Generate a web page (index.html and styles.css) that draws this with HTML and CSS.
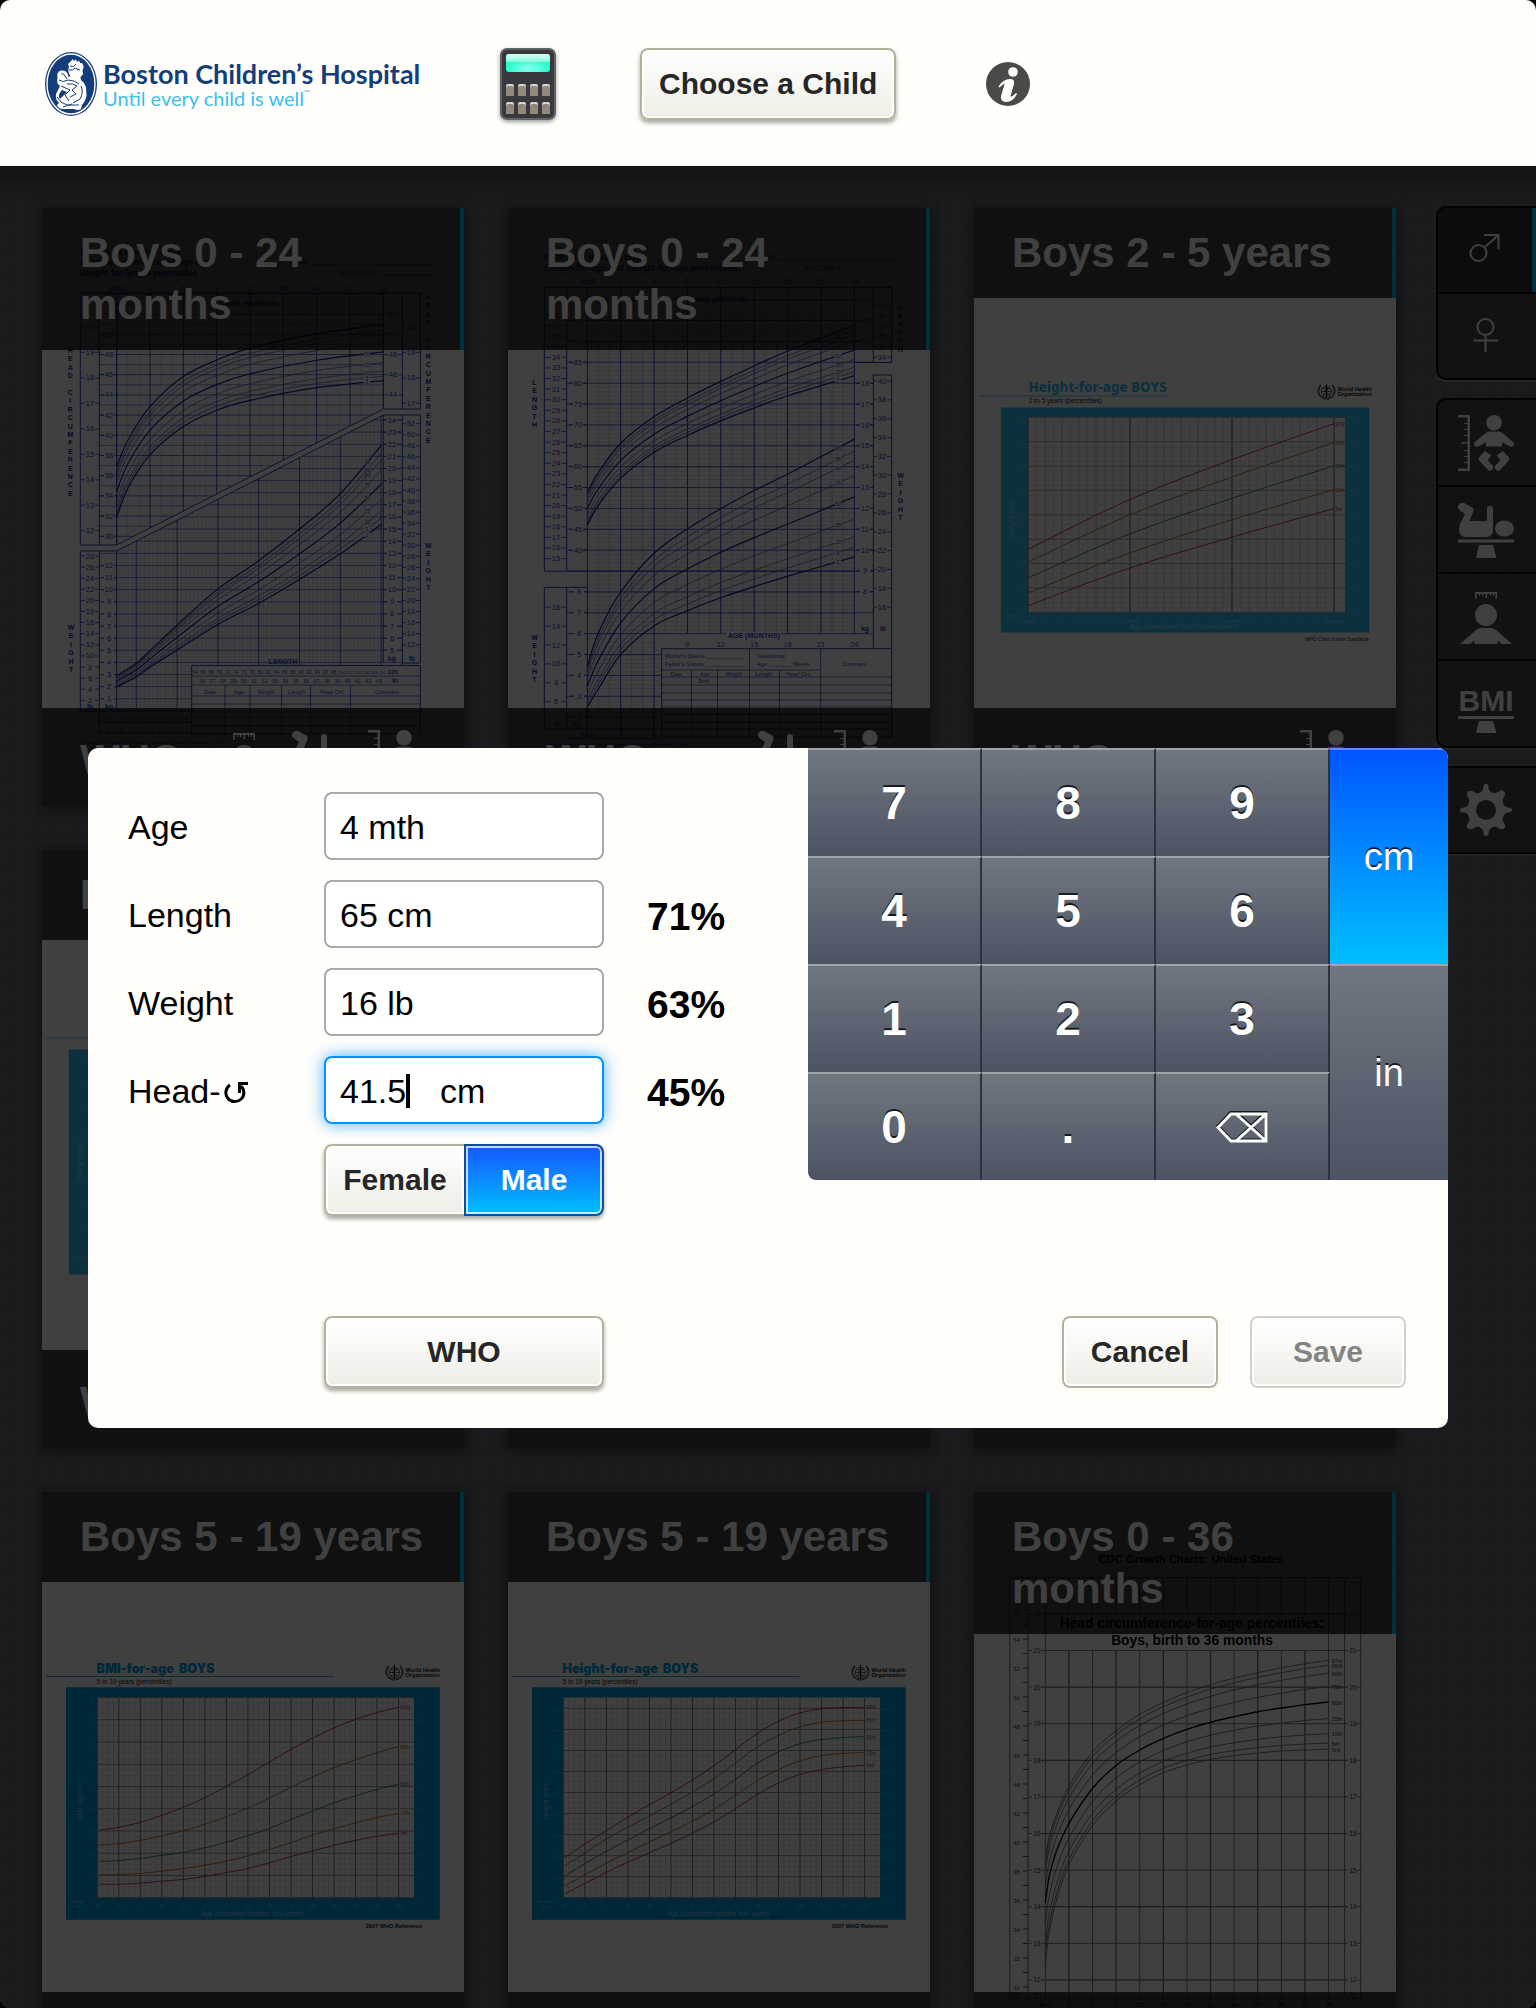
FILE: index.html
```html
<!DOCTYPE html>
<html lang="en">
<head>
<meta charset="utf-8">
<meta name="viewport" content="width=device-width, initial-scale=1">
<title>Growth charts - Boston Children's Hospital</title>
<link rel="stylesheet" href="styles.css">
</head>
<body>
<svg class="sprite" aria-hidden="true">
  <symbol id="i-length" viewBox="0 0 56 56">
    <path d="M0 0H12V56H0V53.5H9.500V2.500H0zM6 8h4v1H6zM6 14h4v1H6zM6 20h4v1H6zM3 27h7v1.500H3zM6 35h4v1H6zM6 41h4v1H6zM6 47h4v1H6z"/>
    <circle cx="36" cy="7.700" r="7.700"/>
    <path d="M32 16.500H40Q43 16.500 45 18.500L55 27Q57 29 55 31Q53.500 32.500 51 31L44 27V31.500H28V27L21 31Q18.500 32.500 17 31Q15 29 17 27L27 18.500Q29 16.500 32 16.500z"/>
    <path d="M27 36L33.500 40.500L29.500 45L35 51Q36 53 34 55Q32 56.500 30 55L21.500 46Q20 44 21.500 42zM45 36L38.500 40.500L42.500 45L37 51Q36 53 38 55Q40 56.500 42 55L50.500 46Q52 44 50.500 42z"/>
  </symbol>
  <symbol id="i-weight" viewBox="0 0 56 56">
    <path d="M6 1L14.500 5.500Q16 7 15.500 9L11.500 19H29V7Q29 4 32 4Q35 4 35 7V28Q35 35 28 35H8Q1 35 1 27Q1 23 3 20L7 12L1.500 8Q-1 6 .5 3Q3 0 6 1z"/>
    <ellipse cx="46.500" cy="26.500" rx="9.500" ry="8"/>
    <path d="M0 37.500H56V40.500H0zM21 43H35L38.500 56H18z"/>
  </symbol>
  <symbol id="i-head" viewBox="0 0 56 56">
    <path d="M17 3H39V10H37.500V5H36V7H35V5H33V7H32V5H29V9H27.500V5H25V7H24V5H22V7H21V5H18.500V10H17z"/>
    <circle cx="28" cy="26" r="11"/>
    <path d="M2 55L18 41Q20 39 23 39H33Q36 39 38 41L54 55H44L39.500 51.500V55H16.500V51.500L12 55z"/>
  </symbol>
  <symbol id="i-male" viewBox="0 0 56 56">
    <path d="M27 25L40 13.500M26 13H40.500V27" class="thin"/><circle cx="20.500" cy="31" r="8" class="thin"/>
  </symbol>
  <symbol id="i-female" viewBox="0 0 56 56">
    <circle cx="27.500" cy="19" r="8" class="thin"/><path d="M27.500 27V44M15.500 32.500H40" class="thin"/>
  </symbol>
  <symbol id="i-gear" viewBox="0 0 56 56">
    <path fill-rule="evenodd" d="M25.500 5Q25.500 2 28 2T30.500 5Q30.500 9 34 10.500T40 10Q43 7 45.200 8.800Q48.500 11 46 15Q43.500 18 45.500 22Q46.500 25 50 25.500Q54 25.500 54 28T50 30.500Q46.500 31 45.500 34Q43.500 38 46 41Q48.500 45 46.300 46.300Q44 48.500 40 46Q37 43.500 34 45.500Q30.500 47 30.500 51Q30.500 54 28 54T25.500 51Q25.500 47 22 45.500Q19 43.500 16 46Q12 48.500 9.700 46.300Q7.500 44 10 41Q12.500 38 10.500 34Q9.500 31 6 30.500Q2 30.500 2 28T6 25.500Q9.500 25 10.500 22Q12.500 18 10 15Q7.500 11 9.700 9.700Q12 7.500 16 10Q19 12.500 22 10.500Q25.500 9 25.500 5zM28 18A10 10 0 1 0 28 38A10 10 0 1 0 28 18z"/>
  </symbol>
  <symbol id="i-who" viewBox="0 0 20 18">
    <circle cx="10" cy="9" r="5.500" class="globe"/>
    <path d="M10 3.500V14.500M4.500 9H15.500M6 5.500Q10 8 14 5.500M6 12.500Q10 10 14 12.500" class="globe"/>
    <path d="M4 2Q-1.500 9 4 14.500L9.500 17M16 2Q21.500 9 16 14.500L10.500 17" class="wreath"/>
    <path d="M10 1V16M8.500 4Q12.500 5 10 7Q7 9 10 10.500Q12 12 9.500 13" class="staff"/>
  </symbol>
</svg>

<div class="app">
  <header class="topbar">
    <a class="brand" href="#">
      <svg class="brand__seal" viewBox="0 0 52 64" aria-hidden="true">
        <ellipse cx="26" cy="32" rx="26" ry="32" fill="#143d7b"/>
        <ellipse cx="26" cy="32" rx="24" ry="30" fill="none" stroke="#fffefb" stroke-width="1.400"/>
        <path fill="#fffefb" d="M26 9L28 7L29 9L31 7.500L32 10L34 8.500L35 11L37 11Q40 15 37.500 18L38 22Q37 24 35.500 25L36 28Q40 31 41 35L41.500 44Q40 50 37 53L36 57Q33 59 29 57L17 57Q13 56 12 53L14 51Q10 47 11 42L15 34Q11 31 12.500 26Q11 20 16 18.500Q22 18 23 23L23.500 25L25.500 24Q22 19 24 15L23 12z"/>
        <path fill="none" stroke="#143d7b" stroke-width="1" d="M25 14Q29 16 31 12M24 18Q28 19 30 16L35 18M16 22Q19 21 20 24L22 27M14 28Q18 31 23 28L29 29L34 32M22 32Q28 31 32 34L27 38L31 42L25 45M16 34L25 38L20 43L24 49M36 34Q39 40 35 47L28 51M12 45Q15 51 22 53L34 53M18 55L27 52"/>
        <path fill="#143d7b" d="M32 18L34 17L33 19zM17 38L22 40L15 47Q12 43 17 38z"/>
      </svg>
      <span class="brand__text">
        <span class="brand__name">Boston Children’s Hospital</span>
        <span class="brand__tag">Until every child is well<small>™</small></span>
      </span>
    </a>
    <button class="calc" type="button" aria-label="Calculator">
      <svg viewBox="0 0 56 72" aria-hidden="true">
        <defs>
          <radialGradient id="lcd" cx=".5" cy=".8" r=".6"><stop offset="0" stop-color="#8effe9"/><stop offset="1" stop-color="#12fcc6"/></radialGradient>
          <linearGradient id="glare" x2="0" y2="1"><stop offset="0" stop-color="#d6fff4"/><stop offset="1" stop-color="#86fbdd"/></linearGradient>
          <g id="calc-key"><rect width="8" height="12" rx="2" fill="#d8d5d2"/><path d="M0 4Q0 2 2 2H6Q8 2 8 4V10Q8 12 6 12H2Q0 12 0 10z" fill="#94877b"/></g>
        </defs>
        <rect x="1" y="1" width="54" height="70" rx="6" fill="#38393d" stroke="#636466" stroke-width="2"/>
        <rect x="6" y="6" width="44" height="18" rx="3" fill="url(#lcd)"/>
        <path d="M6 14V9Q6 6 9 6H47Q50 6 50 9V14z" fill="url(#glare)"/>
        <use href="#calc-key" x="6" y="36"/><use href="#calc-key" x="18" y="36"/><use href="#calc-key" x="30" y="36"/><use href="#calc-key" x="42" y="36"/>
        <use href="#calc-key" x="6" y="54"/><use href="#calc-key" x="18" y="54"/><use href="#calc-key" x="30" y="54"/><use href="#calc-key" x="42" y="54"/>
      </svg>
    </button>
    <button class="btn btn--raised" type="button">Choose a Child</button>
    <button class="info" type="button" aria-label="About">
      <svg viewBox="0 0 44 44" aria-hidden="true">
        <circle cx="22" cy="22" r="22" fill="#4b4a48"/>
        <circle cx="27" cy="10" r="4.800" fill="#fffefb"/>
        <path fill="#fffefb" d="M12.500 24.500Q17 17 24 17Q29 17 28 22L24.500 34Q25 36 30 31L31 32Q27 40 20 40Q14 39.500 15 34L18.500 22.500Q18.500 20.500 13.500 25.500z"/>
      </svg>
    </button>
  </header>

  <main class="stage">
    <section class="gallery" aria-label="Growth charts">
      <article class="card">
        <svg class="card__chart" viewBox="0 0 422 598" data-chart="headWeight"></svg>
        <h2 class="card__title">Boys 0 - 24 months</h2>
        <footer class="card__foot"><span>WHO</span><svg class="icon"><use href="#i-head"/></svg><svg class="icon"><use href="#i-weight"/></svg><svg class="icon"><use href="#i-length"/></svg></footer>
      </article>
      <article class="card">
        <svg class="card__chart" viewBox="0 0 422 598" data-chart="lengthWeight"></svg>
        <h2 class="card__title">Boys 0 - 24 months</h2>
        <footer class="card__foot"><span>WHO</span><svg class="icon"><use href="#i-weight"/></svg><svg class="icon"><use href="#i-length"/></svg></footer>
      </article>
      <article class="card">
        <svg class="card__chart" viewBox="0 0 422 598" data-chart="height2to5"></svg>
        <h2 class="card__title">Boys 2 - 5 years</h2>
        <footer class="card__foot"><span>WHO</span><svg class="icon"><use href="#i-length"/></svg></footer>
      </article>
      <article class="card">
        <svg class="card__chart" viewBox="0 0 422 598" data-chart="weight2to5"></svg>
        <h2 class="card__title">Boys 2 - 5 years</h2>
        <footer class="card__foot"><span>WHO</span><svg class="icon"><use href="#i-weight"/></svg></footer>
      </article>
      <article class="card">
        <svg class="card__chart" viewBox="0 0 422 598"></svg>
        <h2 class="card__title">Boys 2 - 5 years</h2>
        <footer class="card__foot"><span>WHO</span></footer>
      </article>
      <article class="card">
        <svg class="card__chart" viewBox="0 0 422 598"></svg>
        <h2 class="card__title">Boys 5 - 10 years</h2>
        <footer class="card__foot"><span>WHO</span></footer>
      </article>
      <article class="card">
        <svg class="card__chart" viewBox="0 0 422 598" data-chart="bmi5to19"></svg>
        <h2 class="card__title">Boys 5 - 19 years</h2>
        <footer class="card__foot"><span>WHO</span></footer>
      </article>
      <article class="card">
        <svg class="card__chart" viewBox="0 0 422 598" data-chart="height5to19"></svg>
        <h2 class="card__title">Boys 5 - 19 years</h2>
        <footer class="card__foot"><span>WHO</span></footer>
      </article>
      <article class="card">
        <svg class="card__chart" viewBox="0 0 422 598" data-chart="head0to36"></svg>
        <h2 class="card__title">Boys 0 - 36 months</h2>
        <footer class="card__foot"><span>CDC</span></footer>
      </article>
    </section>

    <nav class="filters" aria-label="Filters">
      <div class="filters__group">
        <button class="filters__item is-active" type="button" aria-label="Boys"><svg class="icon"><use href="#i-male"/></svg></button>
        <button class="filters__item" type="button" aria-label="Girls"><svg class="icon"><use href="#i-female"/></svg></button>
      </div>
      <div class="filters__group filters__group--measures">
        <button class="filters__item" type="button" aria-label="Length"><svg class="icon"><use href="#i-length"/></svg></button>
        <button class="filters__item" type="button" aria-label="Weight"><svg class="icon"><use href="#i-weight"/></svg></button>
        <button class="filters__item" type="button" aria-label="Head circumference"><svg class="icon"><use href="#i-head"/></svg></button>
        <button class="filters__item" type="button"><svg class="icon" viewBox="0 0 56 56"><text class="bmi" x="28" y="35" text-anchor="middle">BMI</text><path d="M0 40H56V43H0zM21 45H35L38.500 57H18z"/></svg></button>
      </div>
      <div class="filters__group">
        <button class="filters__item" type="button" aria-label="Settings"><svg class="icon"><use href="#i-gear"/></svg></button>
      </div>
    </nav>

    <div class="overlay">
      <form class="dialog" role="dialog" aria-label="Child measurements">
        <div class="entry">
          <div class="entry__grid">
            <label for="age">Age</label><input class="field" id="age" value="4 mth"><output></output>
            <label for="length">Length</label><input class="field" id="length" value="65 cm"><output>71%</output>
            <label for="weight">Weight</label><input class="field" id="weight" value="16 lb"><output>63%</output>
            <label for="head">Head-<svg class="redo" viewBox="0 0 24 24" aria-hidden="true"><path d="M6 5A9 9 0 1 0 17 6M15.500 13V4M14 3.500H24"/></svg></label>
            <div class="field field--focus"><input class="field__number" id="head" value="41.5"><i class="caret"></i><span>cm</span></div>
            <output>45%</output>
            <div class="toggle">
              <button class="btn" type="button" aria-pressed="false">Female</button>
              <button class="btn btn--on" type="button" aria-pressed="true">Male</button>
            </div>
          </div>
          <button class="btn btn--raised entry__source" type="button">WHO</button>
        </div>
        <div class="side">
          <div class="keypad">
            <button class="key" type="button">7</button><button class="key" type="button">8</button><button class="key" type="button">9</button>
            <button class="key key--unit key--on" type="button">cm</button>
            <button class="key" type="button">4</button><button class="key" type="button">5</button><button class="key" type="button">6</button>
            <button class="key" type="button">1</button><button class="key" type="button">2</button><button class="key" type="button">3</button>
            <button class="key key--unit" type="button">in</button>
            <button class="key" type="button">0</button><button class="key" type="button">.</button>
            <button class="key" type="button" aria-label="Delete"><svg class="erase" viewBox="0 0 52 32" aria-hidden="true"><path class="erase__shade" d="M15 1H50V29H15L2 15zM20 1L50 29M20 29L50 1"/><path d="M15 3H50V30H15L2 16.500zM20 3L50 30M20 30L50 3"/></svg></button>
          </div>
          <div class="actions">
            <button class="btn btn--wide" type="button">Cancel</button>
            <button class="btn btn--wide" type="submit" disabled>Save</button>
          </div>
        </div>
      </form>
    </div>
  </main>
</div>
<script src="charts.js"></script>
</body>
</html>
```
FILE: styles.css
```css
* { box-sizing: border-box; }

body {
  margin: 0;
  background: #000;
  font-family: "Liberation Sans", Arial, Helvetica, sans-serif;
  color: #000;
}

button, input { font-family: inherit; }
button { cursor: pointer; }

.sprite { position: absolute; width: 0; height: 0; }

.app {
  display: flex;
  flex-direction: column;
  height: 100vh;
  border-radius: 10px;
  overflow: hidden;
}

/* Top bar */
.topbar {
  flex: none;
  display: flex;
  align-items: center;
  height: 166px;
  padding: 2px 45px 0;
  background: #fffefb;
}

.brand {
  display: flex;
  align-items: center;
  gap: 6px;
  width: 455px;
  color: #143d7b;
  text-decoration: none;
}
.brand__seal { width: 52px; height: 64px; flex: none; }
.brand__text { display: flex; flex-direction: column; font-family: Lato, "Open Sans", sans-serif; white-space: nowrap; }
.brand__name { font-size: 27px; line-height: 28px; font-weight: 700; }
.brand__tag { font-size: 20px; line-height: 20px; color: #3cc0ea; }
.brand__tag small { font-size: 8px; vertical-align: top; line-height: 10px; }

.calc, .info { padding: 0; border: 0; background: none; display: block; }
.calc { width: 56px; height: 72px; margin-right: 84px; border-radius: 8px; box-shadow: 0 2px 4px rgba(0, 0, 0, .4); }
.calc svg, .info svg { display: block; width: 100%; height: 100%; }
.info { width: 44px; height: 44px; margin-left: 90px; }

.btn {
  height: 72px;
  padding: 0 17px;
  border: 2px solid #b4b19d;
  border-radius: 8px;
  background: linear-gradient(#fff, #eeede6);
  box-shadow: inset 0 0 0 2px #fff;
  color: #262626;
  font-size: 30px;
  font-weight: 700;
}
.btn--raised { box-shadow: inset 0 0 0 2px #fff, 0 3px 4px rgba(0, 0, 0, .35); }
.btn--on {
  border-color: #0a4ea6;
  background: linear-gradient(#1557ff, #00bfff);
  box-shadow: inset 0 0 0 2px rgba(255, 255, 255, .75);
  color: #fff;
}
.btn--wide { width: 156px; }
.btn:disabled { border-color: #d3d1c6; color: #838383; }

/* Page under the dialog */
.stage {
  position: relative;
  flex: 1;
  min-height: 0;
  display: flex;
  align-items: flex-start;
  gap: 40px;
  padding: 40px 0 0 42px;
  overflow: hidden;
  background:
    linear-gradient(rgba(0, 0, 0, .3), rgba(0, 0, 0, 0) 40px),
    repeating-linear-gradient(90deg, rgba(0, 0, 0, .06) 0 1px, transparent 1px 5px, rgba(255, 255, 255, .03) 5px 6px, transparent 6px 13px),
    repeating-linear-gradient(rgba(0, 0, 0, .06) 0 1px, transparent 1px 4px, rgba(255, 255, 255, .03) 4px 5px, transparent 5px 11px),
    #6c6e73;
}

.gallery {
  flex: 1;
  display: grid;
  grid-template-columns: repeat(3, 1fr);
  gap: 44px;
  padding-top: 2px;
}

.card {
  display: grid;
  grid-template-rows: auto 1fr 98px;
  background: #fff;
  box-shadow: 0 2px 14px 2px rgba(0, 0, 0, .45);
}
.card__chart { grid-area: 1 / 1 / 4 / 2; display: block; width: 100%; }
.card__title, .card__foot {
  grid-column: 1;
  margin: 0;
  background: rgba(0, 0, 0, .75);
  color: #fff;
  font-size: 42px;
  line-height: 52px;
  font-weight: 700;
}
.card__title { grid-row: 1; padding: 19px 30px 19px 38px; border-right: 4px solid #00bfff; }
.card__foot { grid-row: 3; display: flex; align-items: center; gap: 20px; padding: 2px 40px 0 38px; }
.card__foot span { margin-right: auto; padding-top: 4px; }

.icon { display: block; width: 56px; height: 56px; fill: #fff; overflow: visible; }
.thin { fill: none; stroke: #fff; stroke-width: 2px; }
.bmi { font-size: 30px; font-weight: 700; }
.globe { fill: none; stroke: #555; stroke-width: 1px; }
.wreath { fill: none; stroke: #666; stroke-width: 2px; }
.staff { fill: none; stroke: #000; stroke-width: 1px; }

.filters { flex: none; width: 100px; display: flex; flex-direction: column; gap: 18px; }
.filters__group {
  border: 2px solid #080808;
  border-right: 0;
  border-radius: 10px 0 0 10px;
  overflow: hidden;
  background: rgba(0, 0, 0, .32);
  box-shadow: 0 2px 0 rgba(255, 255, 255, .2);
}
.filters__item {
  display: flex;
  align-items: center;
  width: 100%;
  height: 84px;
  padding: 0 20px;
  border: 0;
  background: none;
}
.filters__item + .filters__item { height: 86px; border-top: 2px solid #080808; }
.filters__group--measures .filters__item { height: 85px; }
.filters__group--measures .filters__item + .filters__item { height: 87px; }
.filters__item.is-active { background: rgba(0, 0, 0, .3); border-right: 4px solid #00bfff; }

/* Dialog */
.overlay {
  position: absolute;
  inset: 0;
  display: flex;
  align-items: center;
  padding: 2px 88px 0;
  background: rgba(0, 0, 0, .75);
}

.dialog {
  display: grid;
  grid-template-columns: minmax(0, 1fr) 640px;
  width: 100%;
  border-radius: 10px;
  overflow: hidden;
  background: #fffefb;
}

.entry { display: flex; flex-direction: column; gap: 100px; padding: 44px 40px 40px; }
.entry__grid { display: grid; grid-template-columns: 196px 280px 1fr; row-gap: 20px; align-items: center; }
.entry__grid label { display: flex; align-items: center; height: 68px; padding-top: 3px; font-size: 34px; }
.entry__grid output { display: flex; align-items: center; height: 68px; padding: 5px 0 0 43px; font-size: 39px; font-weight: 700; }
.entry__source { width: 280px; margin-left: 196px; }

.redo { width: 24px; height: 24px; margin-left: 3px; fill: none; stroke: #000; stroke-width: 3px; }

.field {
  display: flex;
  align-items: center;
  width: 100%;
  height: 68px;
  padding: 2px 14px 0;
  border: 2px solid #a9a9a9;
  border-radius: 8px;
  background: #fff;
  color: #000;
  font-size: 34px;
}
.field--focus { border-color: #0090ff; box-shadow: 0 0 16px rgba(0, 144, 255, .7); }
.field__number { width: 66px; padding: 0; border: 0; background: none; font-size: 34px; outline: 0; }
.caret { width: 4px; height: 34px; margin-right: 30px; background: #000; }

.toggle { grid-column: 2; display: grid; grid-template-columns: 1fr 1fr; border-radius: 8px; box-shadow: 0 3px 4px rgba(0, 0, 0, .35); }
.toggle .btn { padding: 0; }
.toggle .btn:first-child { border-right: 0; border-radius: 8px 0 0 8px; }
.toggle .btn:last-child { border-radius: 0 8px 8px 0; }

.side { display: flex; flex-direction: column; justify-content: space-between; }
.keypad {
  display: grid;
  grid-template-columns: repeat(3, 174px) 1fr;
  grid-auto-rows: 108px;
  border-bottom-left-radius: 8px;
  overflow: hidden;
}
.key {
  padding: 0;
  border: 0;
  border-top: 2px solid #a1a5aa;
  border-right: 2px solid #2e323b;
  background: linear-gradient(#707780, #4d5363);
  color: #fff;
  font-size: 46px;
  font-weight: 700;
  text-shadow: 0 -2px 0 rgba(0, 0, 0, .75);
}
.key--unit { grid-column: 4; grid-row: span 2; border-right: 0; font-size: 38px; font-weight: 400; }
.key--on { border-top-color: #5c8dff; background: linear-gradient(#0055ff, #00bfff); }
.erase { display: block; width: 52px; height: 32px; margin: 0 auto; fill: none; stroke: #fff; stroke-width: 3px; }
.erase__shade { stroke: #16181d; }

.actions { display: flex; justify-content: flex-end; gap: 32px; padding: 0 42px 40px; }

/* Printed charts */
.card__chart text { font-family: "Liberation Sans", Arial, sans-serif; }
.card__chart .humanist { font-family: "Noto Sans", "Open Sans", sans-serif; }
.card__chart .heavy { font-family: Inter, "Liberation Sans", sans-serif; }
```
FILE: charts.js
```js
// Draws the printed growth charts on the gallery cards.
const INK = '#2a42c4';
const NS = 'http://www.w3.org/2000/svg';

function el(svg, name, attrs, content) {
  const node = document.createElementNS(NS, name);
  for (const key in attrs) node.setAttribute(key, attrs[key]);
  if (content !== undefined) node.textContent = content;
  svg.appendChild(node);
  return node;
}
function line(svg, x1, y1, x2, y2, color, width, extra) {
  el(svg, 'path', Object.assign({ d: `M${x1} ${y1}L${x2} ${y2}`, stroke: color, 'stroke-width': width, fill: 'none' }, extra));
}
function text(svg, x, y, value, size, color, extra) {
  el(svg, 'text', Object.assign({ x, y, 'font-size': size, fill: color, 'text-anchor': 'middle' }, extra), value);
}
function box(svg, x1, y1, x2, y2, fill, stroke, width) {
  el(svg, 'rect', { x: x1, y: y1, width: x2 - x1, height: y2 - y1, fill, stroke: stroke || 'none', 'stroke-width': width || 0 });
}
function stacked(svg, x, y, word) {
  [...word].forEach((c, i) => text(svg, x, y + i * 8.4, c, 7, '#16289c', { 'font-weight': 700 }));
}
// Catmull-Rom spline through the points
function curve(svg, points, color, width) {
  let d = `M${points[0]}`;
  for (let i = 0; i < points.length - 1; i++) {
    const p0 = points[i - 1] || points[i], p1 = points[i], p2 = points[i + 1], p3 = points[i + 2] || p2;
    d += `C${p1[0] + (p2[0] - p0[0]) / 6} ${p1[1] + (p2[1] - p0[1]) / 6} ${p2[0] - (p3[0] - p1[0]) / 6} ${p2[1] - (p3[1] - p1[1]) / 6} ${p2[0]} ${p2[1]}`;
  }
  el(svg, 'path', { d, stroke: color, 'stroke-width': width, fill: 'none' });
}
// Nine percentile curves between the highest and the lowest one
function fan(svg, xs, top, bottom, labelX) {
  [0, .1, .18, .31, .49, .68, .83, .92, 1].forEach((f, i) => {
    const points = xs.map((x, k) => [x, top[k] + (bottom[k] - top[k]) * f]);
    const strong = i % 4 === 0;
    curve(svg, points, strong ? '#0a1c90' : '#5a68b4', strong ? 1.2 : .8);
    const a = points[points.length - 2], b = points[points.length - 1];
    const y = a[1] + (b[1] - a[1]) * (labelX - a[0]) / (b[0] - a[0]);
    box(svg, labelX - 3, y - 2, labelX + 3, y + 2, '#fff');
    text(svg, labelX, y + 2, [98, 95, 90, 75, 50, 25, 10, 5, 2][i], 5, INK);
  });
}
function scale(svg, x, from, step, y, dy, count, half, size) {
  for (let i = 0; i < count; i++) {
    line(svg, x - half, y + i * dy, x + half, y + i * dy, INK, .8);
    box(svg, x - 5, y + i * dy - 3, x + 5, y + i * dy + 3, '#fff');
    text(svg, x, y + i * dy + 2.5, from + step * i, size || 7.5, INK);
  }
}

const charts = {
  headWeight(s) {
    const X = m => 74.7 + m * 11.11;
    text(s, 38, 47, 'Birth to 24 months: Boys', 8.5, INK, { 'font-weight': 700, 'text-anchor': 'start' });
    text(s, 38, 57, 'Head circumference-for-age and', 8.5, INK, { 'font-weight': 700, 'text-anchor': 'start' });
    text(s, 38, 68, 'Weight-for-length percentiles', 8.5, INK, { 'font-weight': 700, 'text-anchor': 'start' });
    text(s, 257, 56, 'NAME', 7, INK); line(s, 270, 57, 390, 57, INK, .6);
    text(s, 316, 67, 'RECORD #', 7, INK); line(s, 338, 67, 390, 67, INK, .6);
    text(s, 75, 83, 'Birth', 7.5, INK);
    for (let m = 3; m <= 24; m += 3) text(s, X(m), 83, m, 7.5, INK);
    const defs = el(s, 'defs', {});
    el(el(defs, 'clipPath', { id: 'upper' }), 'path', { d: 'M57 85H360V201H341.300L74.700 337H57z' });
    el(el(defs, 'clipPath', { id: 'lower' }), 'path', { d: 'M57 343H74.700L341.300 207H360V458H182V503H57z' });
    const up = el(s, 'g', { 'clip-path': 'url(#upper)' }), low = el(s, 'g', { 'clip-path': 'url(#lower)' });
    for (let m = 0; m <= 24; m++) line(up, X(m), 85, X(m), 337, INK, m % 3 ? .15 : .9);
    for (let i = 0; i < 26; i++) line(up, 57, 85.9 + i * 10.1, 341, 85.9 + i * 10.1, INK, i % 2 ? .5 : .7);
    for (let i = 0; i < 105; i++) line(up, 75, 85.9 + i * 2.525, 341, 85.9 + i * 2.525, INK, .06);
    for (let i = 0; i < 66; i++) line(low, 94.3 - 20.5 + i * 4.1, 200, 94.3 - 20.5 + i * 4.1, 503, INK, .14);
    for (let i = 0; i < 7; i++) line(low, 94.3 + i * 40.8, 200, 94.3 + i * 40.8, 503, INK, .8);
    for (let i = 0; i < 25; i++) line(low, 57, 212 + i * 12.12, 360, 212 + i * 12.12, INK, .6);
    for (let i = 0; i < 100; i++) line(low, 75, 212 + i * 3.03, 341, 212 + i * 3.03, INK, .08);
    el(s, 'path', { d: 'M38.300 85H378.300V201H341.300L74.700 337H38.300zM57.300 85V337M74.700 85V337M341.300 85V201M360.300 85V201M38.300 503V343H74.700L341.300 207H378.300V455H360M57.300 343V525M74.700 343V503M341.300 207V455M360.300 207V477M38.300 503H182M57.300 525H182M57.300 514H182', fill: 'none', stroke: INK, 'stroke-width': 1 });
    scale(s, 48, 20, -1, 118.8, 25.5, 9, 9);
    scale(s, 67, 50, -2, 126.3, 20.2, 11, 9);
    scale(s, 351, 52, -2, 106.1, 20.2, 5, 9);
    scale(s, 369, 20, -1, 118.8, 25.5, 4, 9);
    scale(s, 48, 28, -2, 348, 11.1, 14, 9);
    scale(s, 67, 12, -1, 357.6, 12.12, 12, 8);
    scale(s, 350, 24, -1, 212, 12.12, 20, 9);
    scale(s, 369, 52, -2, 215.7, 11.05, 21, 9);
    fan(s, [74.7, 85.8, 108, 141.3, 174.7, 208, 274.7, 341.3], [258.8, 232.3, 198.7, 168.6, 152, 140.2, 125.9, 116.4], [309.4, 280.5, 246.9, 218.5, 202.2, 192.4, 179.7, 172.6], 325);
    fan(s, [74.7, 94.3, 108, 135.3, 176.3, 217, 257.3, 298.3, 339.7], [467.6, 455.3, 442.6, 417, 380.6, 352.5, 321.3, 285.7, 237], [479, 469.1, 459.3, 441.9, 416.2, 395.2, 371.5, 345.8, 316.1], 325);
    text(s, 210, 98, 'AGE (MONTHS)', 7, INK, { 'font-weight': 700 });
    box(s, 149.7, 457.500, 378.3, 526, '#fff', INK, 1);
    text(s, 241, 456, 'LENGTH', 7, INK, { 'font-weight': 700 });
    for (let i = 0; i < 24; i++) text(s, 153 + i * 8.15, 466, 64 + i * 2, i > 17 ? 4.4 : 5, INK);
    for (let i = 0; i < 18; i++) text(s, 160 + i * 10.4, 475, 26 + i, 5.5, INK);
    text(s, 351, 466, 'cm', 7, INK, { 'font-weight': 700 }); text(s, 353, 475, 'in', 7, INK, { 'font-weight': 700 });
    text(s, 350, 453, 'kg', 7, INK, { 'font-weight': 700 }); text(s, 370, 453, 'lb', 7, INK, { 'font-weight': 700 });
    text(s, 48, 501, 'lb', 7, INK, { 'font-weight': 700 }); text(s, 67, 501, 'kg', 7, INK, { 'font-weight': 700 });
    text(s, 66, 512, 'cm', 6, INK); text(s, 66, 523, 'in', 6, INK);
    for (let i = 0; i < 9; i++) text(s, 79 + i * 8, 512, 46 + i * 2, 5, INK);
    for (let i = 0; i < 7; i++) text(s, 79 + i * 10, 523, 18 + i, 5, INK);
    [468, 477, 488, 496, 504, 510, 518].forEach(y => line(s, 149.7, y, 378.3, y, INK, .7));
    [183, 208, 239.5, 268.5, 308.5].forEach(x => line(s, x, 477, x, 526, INK, .8));
    [['Date', 168], ['Age', 197], ['Weight', 224], ['Length', 254.5], ['Head Circ.', 290.5], ['Comment', 345]].forEach(t => text(s, t[1], 486, t[0], 5.5, INK));
    text(s, 38, 536, 'Published by the Centers for Disease Control and Prevention, November 1, 2009', 4, INK, { 'text-anchor': 'start' });
    stacked(s, 28.3, 145, 'HEAD CIRCUMFERENCE'); stacked(s, 386.3, 92, 'HEAD CIRCUMFERENCE');
    stacked(s, 29, 422, 'WEIGHT'); stacked(s, 386.3, 340, 'WEIGHT');
  },

  lengthWeight(s) {
    const X = m => 79.3 + m * 11.125;
    text(s, 36, 52, 'Birth to 24 months: Boys', 8.5, INK, { 'font-weight': 700, 'text-anchor': 'start' });
    text(s, 36, 63, 'Length-for-age and Weight-for-age percentiles', 8.8, INK, { 'font-weight': 700, 'text-anchor': 'start' });
    text(s, 257, 52, 'NAME', 7, INK); line(s, 270, 52, 388, 52, INK, .6);
    text(s, 315, 63, 'RECORD #', 7, INK);
    text(s, 80, 76, 'Birth', 7.5, INK);
    for (let m = 3; m <= 24; m += 3) text(s, X(m), 76, m, 7.5, INK);
    for (let m = 0; m <= 24; m++) line(s, X(m), 79.3, X(m), m < 7 ? 530 : 425, INK, m % 3 ? .25 : 1);
    for (let i = 0; i < 22; i++) line(s, 58.7, 91.6 + i * 20.88, i < 17 ? 365 : 153, 91.6 + i * 20.88, INK, .8);
    for (let i = 0; i < 106; i++) line(s, 79.3, 79.3 + i * 4.18, i < 83 ? 346 : 153, 79.3 + i * 4.18, INK, .14);
    box(s, 59.500, 364, 78.500, 379, '#fff'); box(s, 347, 156, 383.700, 166, '#fff');
    el(s, 'path', { d: 'M36.300 363.200V79.300H383.700V154.500H346M58.700 79.300V363.200M36.300 363.200H346M365.300 79.300V154M365.300 167H383.700V440M365.300 167V440M36.300 521V379.400H79.300M36.300 521H153M58.700 379.400V521', fill: 'none', stroke: INK, 'stroke-width': 1 });
    scale(s, 48, 38, -1, 107, 10.59, 24, 11);
    scale(s, 70, 95, -5, 112.5, 20.88, 12, 9);
    scale(s, 71, 8, -1, 383.7, 20.88, 7, 8);
    scale(s, 48, 16, -2, 399.2, 18.9, 6, 11);
    scale(s, 357, 100, -5, 91.6, 20.88, 3, 9);
    scale(s, 374, 39, -1, 97.5, 10.36, 6, 9);
    scale(s, 357, 18, -1, 175.4, 20.83, 11, 9);
    scale(s, 374, 40, -2, 173, 18.85, 13, 9);
    const xs = [79.3, 90.3, 113, 146.3, 179.3, 212.7, 246.3, 279.3, 346.3];
    fan(s, xs, [284.9, 264.7, 235, 208.6, 190, 173.4, 158, 143.3, 117.2], [316.9, 297.5, 269.9, 244.2, 227.5, 212.9, 199.9, 188, 167.8], 330);
    fan(s, xs, [458.5, 424.9, 383.7, 345, 320.9, 300.7, 282.5, 266.3, 231.1], [499.2, 481, 446.2, 417.7, 402.7, 389.7, 378.6, 368.3, 348.9], 330);
    box(s, 218, 424, 273, 431, '#fff');
    text(s, 213, 94, 'AGE (MONTHS)', 7, INK, { 'font-weight': 700 });
    text(s, 246, 429.500, 'AGE (MONTHS)', 7, INK, { 'font-weight': 700 });
    for (let m = 9; m <= 24; m += 3) text(s, X(m), 438.500, m, 7.5, INK);
    text(s, 357, 423, 'kg', 7, INK, { 'font-weight': 700 }); text(s, 375, 423, 'lb', 7, INK, { 'font-weight': 700 });
    text(s, 49, 519, 'lb', 7, INK); text(s, 69, 519, 'kg', 7, INK);
    text(s, 80, 530, 'Birth', 7.5, INK); text(s, 113, 530, 3, 7.5, INK); text(s, 146, 530, 6, 7.5, INK);
    box(s, 153.700, 440.700, 383.700, 529, '#fff', INK, 1);
    [462, 469, 477, 485, 492, 499, 506, 514, 521].forEach(y => line(s, 153.7, y, y < 469 ? 312.7 : 383.7, y, INK, .7));
    [183.5, 209.5, 271.5].forEach(x => line(s, x, 462, x, 529, INK, .8));
    line(s, 241.5, 440.7, 241.5, 529, INK, .8); line(s, 312.7, 440.7, 312.7, 529, INK, .8);
    text(s, 157, 450, "Mother's Stature ____________", 5.5, INK, { 'text-anchor': 'start' });
    text(s, 157, 458, "Father's Stature _____________", 5.5, INK, { 'text-anchor': 'start' });
    text(s, 249, 450, 'Gestational', 5.5, INK, { 'text-anchor': 'start' });
    text(s, 249, 458, 'Age: _______  Weeks', 5.5, INK, { 'text-anchor': 'start' });
    text(s, 346, 458, 'Comment', 5.5, INK);
    [['Date', 168], ['Age', 197], ['Weight', 226], ['Length', 256], ['Head Circ.', 291]].forEach(t => text(s, t[1], 467.5, t[0], 5.5, INK));
    text(s, 196, 475, 'Birth', 5.5, INK);
    text(s, 36, 538, 'Published by the Centers for Disease Control and Prevention, November 1, 2009', 4, INK, { 'text-anchor': 'start' });
    stacked(s, 26.500, 177, 'LENGTH'); stacked(s, 392.500, 102, 'LENGTH');
    stacked(s, 26.500, 432, 'WEIGHT'); stacked(s, 392.500, 270, 'WEIGHT');
  },

  head0to36(s) {
    const K = '#707070', T = '#3c3c3c', X = m => 71.3 + m * 7.867;
    text(s, 217, 71, 'CDC Growth Charts: United States', 11.3, '#000', { 'font-weight': 700 });
    for (let m = 0; m <= 36; m += 3) {
      line(s, X(m), 85.5, X(m), 121.9, K, 1);
      line(s, X(m), m % 36 ? 158.2 : 121.9, X(m), 506, K, m % 6 ? 1.3 : .9);
      text(s, X(m), 515, m || 'Birth', 6, '#000');
    }
    for (let i = 0; i < 11; i++) {
      const y = 121.9 + i * 36.6;
      line(s, 67, y, 374, y, K, i % 2 ? .9 : 1.2);
      line(s, 54, y, 58, y, K, .9); line(s, 383, y, 387, y, K, .9);
      text(s, 63, y + 2.5, 22 - i, 6.5, T); text(s, 379, y + 2.5, 22 - i, 6.5, T);
    }
    for (let i = 0; i < 27; i++) {
      const y = 118 + i * 14.5;
      line(s, 49, y, 54, y, T, .9);
      if (i % 2 === 0) text(s, 42.500, y + 2.5, 56 - i, 6, T);
    }
    for (let i = 0; i < 130; i++) line(s, 52.5, 118 + i * 2.9, 54, 118 + i * 2.9, K, .3);
    el(s, 'path', { d: 'M35.800 85.500H386.700V506.600H35.800zM54.100 85.500V506.600M370.600 85.500V506.600', fill: 'none', stroke: K, 'stroke-width': 1 });
    text(s, 379, 93, 'in', 6, T); text(s, 42, 504, 'cm', 6, '#000'); text(s, 63, 504, 'in', 6, '#000'); text(s, 379, 504, 'in', 6, '#000');
    text(s, 218, 136, 'Head circumference-for-age percentiles:', 13.8, '#000', { 'font-weight': 700 });
    text(s, 218, 153, 'Boys, birth to 36 months', 13.8, '#000', { 'font-weight': 700 });
    const xs = [71.3, 75, 82.5, 95.2, 118.7, 142.3, 165.8, 189.4, 212.9, 236.5, 260.4, 283.9, 307.5, 331, 354.5];
    const top = [367, 346, 322, 294, 260, 238.5, 222.4, 210.4, 200.6, 192.7, 186, 180.7, 175.8, 171.7, 168.3];
    const mid = [411, 385.5, 359, 331, 296.2, 273.3, 258, 246.3, 237.3, 230.2, 224.6, 219.7, 216, 212.6, 210];
    const low = [473.6, 441.7, 408, 372.3, 333.3, 309, 292.5, 280.8, 273, 267.3, 263.6, 261, 259, 258, 257.2];
    const names = ['97th', '95th', '90th', '75th', '50th', '25th', '10th', '5th', '3rd'];
    [0, .12, .31, .63, 1, 1.35, 1.67, 1.87, 2].forEach((f, i) => {
      const pts = xs.map((x, k) => [x, f <= 1 ? top[k] + (mid[k] - top[k]) * f : mid[k] + (low[k] - mid[k]) * (f - 1)]);
      curve(s, pts, i === 4 ? '#000' : '#6c6c6c', i === 4 ? 1.4 : .9);
      text(s, 357.500, pts[14][1] + 2.5, names[i], 5.8, T, { 'text-anchor': 'start' });
    });
  }
};

const PERCENTILES = [['97th', '#b8203c'], ['85th', '#b8621c'], ['50th', '#20802c'], ['15th', '#b8621c'], ['3rd', '#b8203c']];

// Sheet header and frame shared by the WHO charts
function whoSheet(s, o) {
  text(s, 54.500, o.titleY, o.title, o.titleSize, o.blue, { 'text-anchor': 'start', 'font-weight': o.weight, class: o.titleFace, style: 'white-space:pre' });
  line(s, 4, o.ruleY, o.ruleEnd, o.ruleY, o.blue, .8);
  text(s, 54.500, o.titleY + 10.5, o.sub, o.subSize, '#111', { 'text-anchor': 'start', class: o.face });
  el(s, 'use', { href: '#i-who', x: 343, y: o.titleY - 9, width: 19, height: 17 });
  text(s, 363.500, o.titleY - 1.5, 'World Health', 5.6, '#111', { 'text-anchor': 'start', 'font-weight': 700 });
  text(s, 363.500, o.titleY + 4, 'Organization', 5.6, '#111', { 'text-anchor': 'start', 'font-weight': 700 });
  box(s, o.frame[0], o.frame[1], o.frame[2], o.frame[3], o.blue);
  box(s, o.plot[0], o.plot[1], o.plot[2], o.plot[3], '#fff');
  const pale = 'rgba(255,255,255,.5)', midY = (o.plot[1] + o.plot[3]) / 2 + 4;
  text(s, 40, midY, o.axis, 7, pale, { transform: `rotate(-90 40 ${midY})`, class: o.face });
  text(s, 210, o.frame[3] - 4, 'Age (completed months and years)', 6.6, pale, { class: o.face });
  text(s, o.frame[0] + 12, o.plot[3] + 5, 'Months', 4, pale);
}
function whoCurves(s, rows, xs) {
  rows.forEach((ys, i) => {
    curve(s, ys.map((y, k) => [xs[k], y]), PERCENTILES[i][1], .9);
    text(s, xs[xs.length - 1] + 1.5, ys[ys.length - 1] + 2, PERCENTILES[i][0], 4.8, PERCENTILES[i][1], { 'text-anchor': 'start' });
  });
}
function youngSheet(s, title, axis, first, step) {
  whoSheet(s, { title, axis, titleY: 184, titleSize: 13.4, weight: 800, face: 'humanist', titleFace: 'humanist', blue: '#30c0f4', ruleY: 188, ruleEnd: 195, sub: '2 to 5 years (percentiles)', subSize: 6.4, frame: [26.8, 199.5, 395.3, 424.5], plot: [54, 209.4, 371, 404.3] });
  for (let i = 0; i <= 36; i++) line(s, 54 + i * 8.5, 209.4, 54 + i * 8.5, 404.3, i % 12 ? '#b8b8b8' : '#808080', i % 12 ? (i % 2 ? .35 : .7) : 1.3);
  for (let i = 0; i <= 40; i++) line(s, 54, 209.4 + i * 4.87, 371, 209.4 + i * 4.87, '#999', i % 5 ? .15 : .8);
  for (let i = 0; i <= 8; i++) [47, 378].forEach(x => text(s, x, 211.4 + i * 24.37, first - i * step, 4.2, 'rgba(255,255,255,.35)'));
  for (let i = 1; i < 18; i++) if (i % 6) text(s, 54 + i * 17, 408.5, (i % 6) * 2, 4, 'rgba(255,255,255,.35)');
  for (let i = 0; i < 4; i++) text(s, 54 + i * 102, 415, `${i + 2} years`, 5, 'rgba(255,255,255,.5)', { class: 'humanist' });
  text(s, 395, 432.500, 'WHO Child Growth Standards', 4.8, '#111', { 'text-anchor': 'end' });
  whoCurves(s, [[341.4, 291.6, 251.7, 215.7], [354.1, 307, 269.1, 234.7], [369.9, 326, 290.4, 258], [384.9, 345, 311.8, 281.7], [397.6, 360, 329.2, 300.7]], [54, 155.7, 257.8, 359.8]);
}
function olderSheet(s, title, axis, rows, ticks) {
  whoSheet(s, { title, axis, titleY: 181, titleSize: 12.6, weight: 900, face: '', titleFace: 'heavy', blue: '#009ce0', ruleY: 184.5, ruleEnd: 291.7, sub: '5 to 19 years (percentiles)', subSize: 6.5, frame: [24, 195.3, 397.7, 427.8], plot: [55.3, 205.5, 372, 405.7] });
  for (let i = 0; i <= 58; i++) line(s, 55.3 + i * 5.38, 205.5, 55.3 + i * 5.38, 405.7, i % 4 ? '#c4c4c4' : '#808080', i % 4 ? .4 : 1.1);
  ticks.forEach(([label, y], i) => {
    line(s, 55.3, y, 372, y, '#888', .9);
    [49.5, 377].forEach(x => text(s, x, y + 2.5, label, 4.4, 'rgba(255,255,255,.35)'));
    if (i) for (let j = 1; j < 4; j++) line(s, 55.3, y + j * (ticks[i - 1][1] - y) / 4, 372, y + j * (ticks[i - 1][1] - y) / 4, '#c4c4c4', .4);
  });
  for (let i = 0; i <= 14; i++) {
    text(s, 55.3 + i * 21.53, 415.5, i + 5, 5, 'rgba(255,255,255,.35)');
    if (i < 14) [3, 6, 9].forEach(m => text(s, 55.3 + i * 21.53 + m * 1.79, 410, m, 4, 'rgba(255,255,255,.25)'));
  }
  text(s, 37, 415.500, 'Years', 4, 'rgba(255,255,255,.45)');
  text(s, 380, 436, '2007 WHO Reference', 5.6, '#111', { 'text-anchor': 'end', 'font-weight': 700 });
  // ordinates come from the print sheet, which is 8/3 the size of the card
  const xs = rows[0].map((_, i) => i ? 55.3 + i * 21.53 : 57);
  whoCurves(s, rows.map(r => r.map(y => y * .375 - 72)), xs);
}

charts.height2to5 = s => youngSheet(s, 'Height-for-age BOYS', 'Height (cm)', 120, 5);
charts.weight2to5 = s => youngSheet(s, 'Weight-for-age BOYS', 'Weight (kg)', 24, 2);
charts.bmi5to19 = s => olderSheet(s, 'BMI-for-age  BOYS', 'BMI (kg/m²)', [
  [1094, 1086, 1073, 1054, 1033, 1007, 977, 946, 912, 878, 848, 821, 798, 780, 766],
  [1133, 1130, 1121, 1109, 1095, 1078, 1058, 1035, 1008, 979, 952, 927, 906, 887, 871],
  [1177, 1175, 1169, 1161, 1153, 1141, 1126, 1108, 1089, 1065, 1043, 1021, 1002, 985, 971],
  [1213, 1212, 1209, 1203, 1196, 1187, 1176, 1162, 1145, 1127, 1107, 1090, 1074, 1060, 1049],
  [1238, 1238, 1235, 1230, 1225, 1217, 1207, 1196, 1181, 1164, 1149, 1134, 1121, 1110, 1102]
], Array.from({ length: 10 }, (_, i) => [12 + i * 2, 405.7 - i * 22.24]));
charts.height5to19 = s => olderSheet(s, 'Height-for-age  BOYS', 'Height (cm)', [
  [1166, 1131, 1095, 1059, 1026, 994, 960, 922, 879, 836, 803, 781, 770, 767, 766],
  [1188, 1155, 1117, 1086, 1056, 1025, 992, 956, 915, 872, 841, 818, 806, 802, 801],
  [1216, 1183, 1150, 1120, 1090, 1061, 1031, 997, 958, 916, 885, 863, 852, 847, 844],
  [1242, 1213, 1182, 1153, 1125, 1098, 1070, 1038, 1001, 962, 932, 909, 895, 889, 887],
  [1263, 1236, 1206, 1179, 1154, 1129, 1102, 1072, 1036, 999, 968, 945, 932, 925, 921]
], Array.from({ length: 10 }, (_, i) => [100 + i * 10, 405.7 - i * 21.04]));

document.querySelectorAll('[data-chart]').forEach(svg => charts[svg.dataset.chart](svg));
```
